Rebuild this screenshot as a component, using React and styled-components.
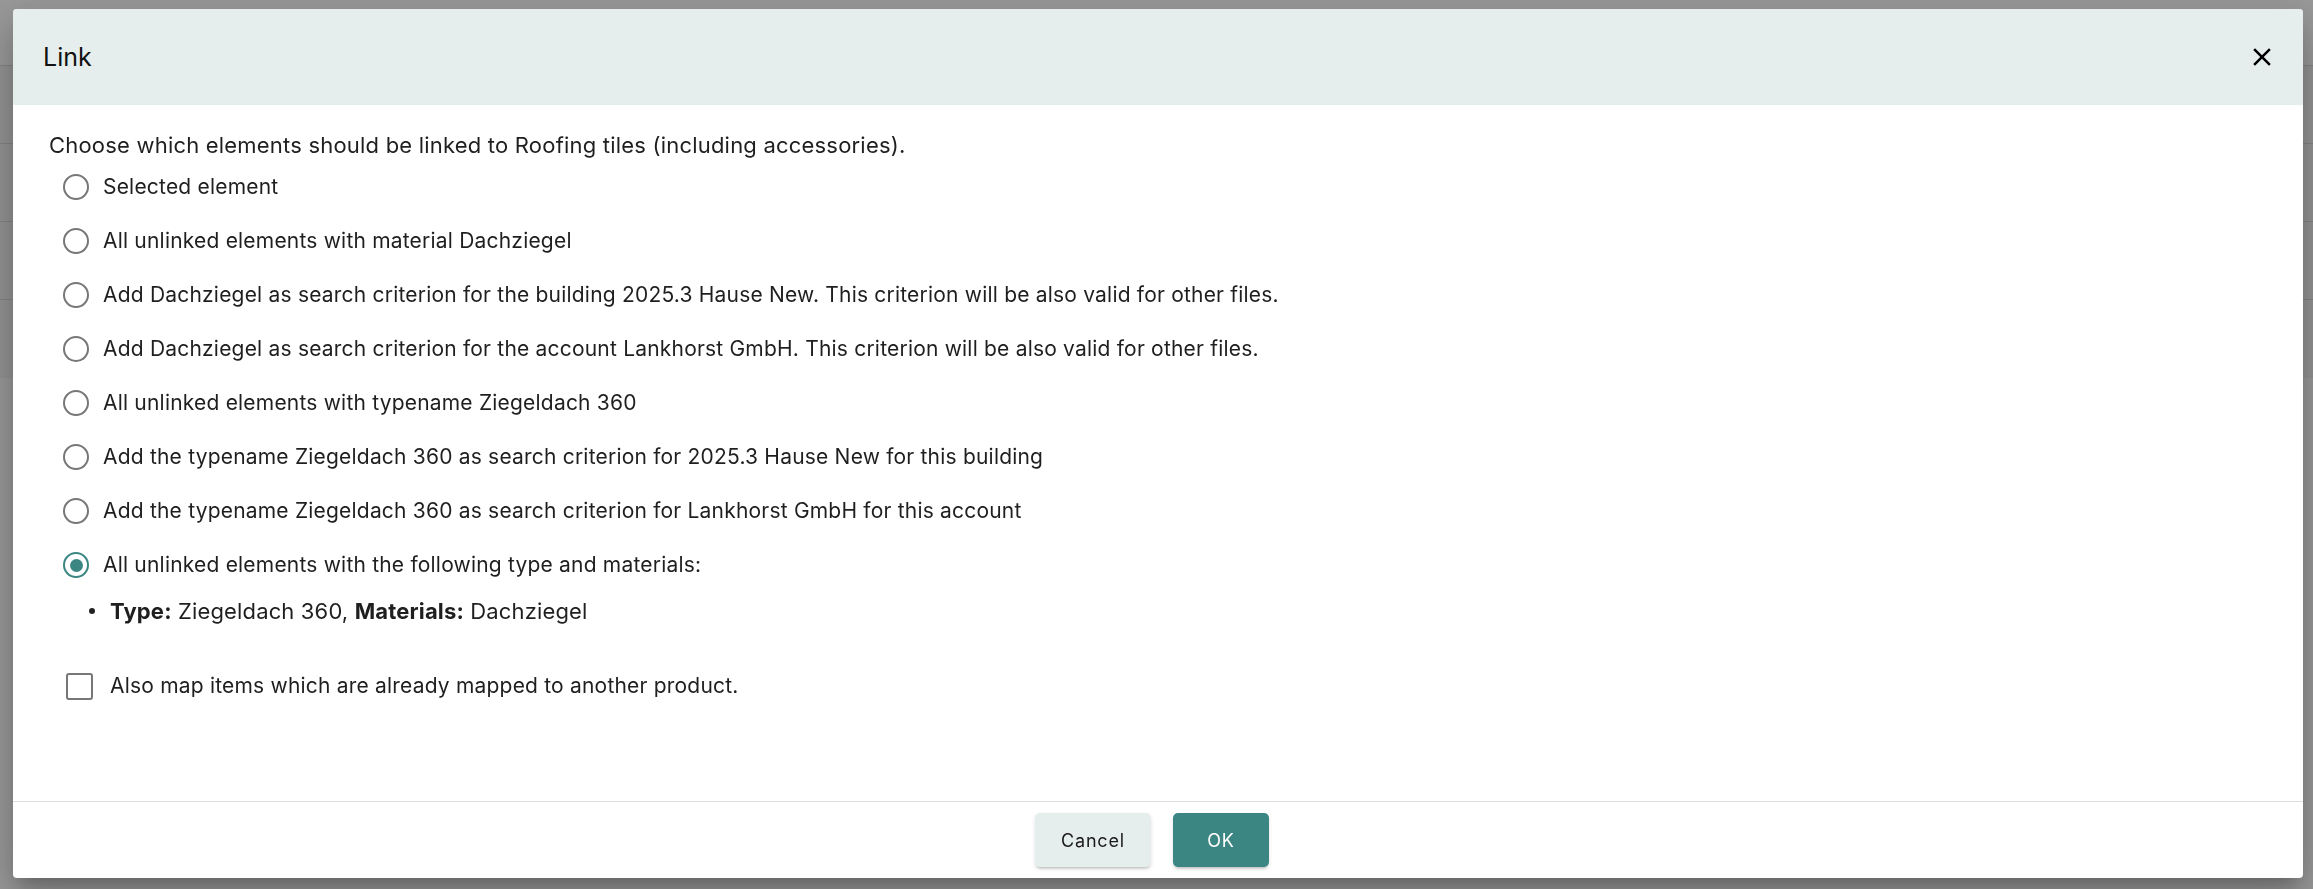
import React, { useState } from 'react'
import styled, { createGlobalStyle } from 'styled-components'

const GlobalStyle = createGlobalStyle`
  html, body {
    margin: 0;
    padding: 0;
    height: 100%;
    overflow: hidden;
    font-family: Inter, "Noto Sans", "Liberation Sans", sans-serif;
  }
  #root { height: 100%; }
`

const options = [
    'Selected element',
    'All unlinked elements with material Dachziegel',
    'Add Dachziegel as search criterion for the building 2025.3 Hause New. This criterion will be also valid for other files.',
    'Add Dachziegel as search criterion for the account Lankhorst GmbH. This criterion will be also valid for other files.',
    'All unlinked elements with typename Ziegeldach 360',
    'Add the typename Ziegeldach 360 as search criterion for 2025.3 Hause New for this building',
    'Add the typename Ziegeldach 360 as search criterion for Lankhorst GmbH for this account',
    'All unlinked elements with the following type and materials:',
]

export default function App() {
    const [selected, setSelected] = useState(7)
    const [alsoMap, setAlsoMap] = useState(false)

    return (
        <>
            <GlobalStyle />
            <Page>
                <PageTop />
                <PageRow />
                <PageRow />
                <PageRow />
                <PageRow $last />
            </Page>
            <Backdrop>
                <Dialog>
                    <Header>
                        <Title>Link</Title>
                        <CloseButton aria-label="close">
                            <svg width="30" height="30" viewBox="0 0 24 24">
                                <path
                                    fill="currentColor"
                                    d="M19 6.41 17.59 5 12 10.59 6.41 5 5 6.41 10.59 12 5 17.59 6.41 19 12 13.41 17.59 19 19 17.59 13.41 12z"
                                />
                            </svg>
                        </CloseButton>
                    </Header>
                    <Body>
                        <Intro>Choose which elements should be linked to Roofing tiles (including accessories).</Intro>
                        <RadioGroup>
                            {options.map((label, i) => (
                                <RadioRow key={i} onClick={() => setSelected(i)}>
                                    <RadioCircle $checked={selected === i} />
                                    <span>{label}</span>
                                </RadioRow>
                            ))}
                        </RadioGroup>
                        <Detail>
                            <Dot />
                            <span>
                                <b>Type:</b> Ziegeldach 360, <b>Materials:</b> Dachziegel
                            </span>
                        </Detail>
                        <CheckRow onClick={() => setAlsoMap(!alsoMap)}>
                            <CheckBox $checked={alsoMap} />
                            <span>Also map items which are already mapped to another product.</span>
                        </CheckRow>
                    </Body>
                    <Footer>
                        <Button>Cancel</Button>
                        <Button $primary>OK</Button>
                    </Footer>
                </Dialog>
            </Backdrop>
        </>
    )
}

const Page = styled.div`
  height: 100%;
  background: #ffffff;
  display: flex;
  flex-direction: column;
`

const PageTop = styled.div`
  height: 65px;
  border-bottom: 1px solid #dcdcdc;
`

const PageRow = styled.div`
  height: 77px;
  background: #f6f6f6;
  border-bottom: 1px solid ${p => (p.$last ? 'transparent' : '#dcdcdc')};
`

const Backdrop = styled.div`
  position: fixed;
  inset: 0;
  background: rgba(0, 0, 0, 0.4);
  display: flex;
  align-items: flex-start;
  padding: 9px 0 0 13px;
`

const Dialog = styled.div`
  width: 2290px;
  height: 869px;
  background: #ffffff;
  border-radius: 4px;
  overflow: hidden;
  display: flex;
  flex-direction: column;
  box-shadow: 0 11px 15px -7px rgba(0, 0, 0, 0.2), 0 24px 38px 3px rgba(0, 0, 0, 0.14),
    0 9px 46px 8px rgba(0, 0, 0, 0.12);
`

const Header = styled.div`
  height: 96px;
  flex-shrink: 0;
  background: #e6eeed;
  display: flex;
  align-items: center;
  justify-content: space-between;
  padding: 0 26px 0 30px;
  box-sizing: border-box;
`

const Title = styled.h2`
  margin: 0;
  font-size: 25px;
  font-weight: 400;
  color: #111;
`

const CloseButton = styled.button`
  border: none;
  background: none;
  padding: 0;
  width: 30px;
  height: 30px;
  color: #000;
  display: flex;
  cursor: pointer;
`

const Body = styled.div`
  flex: 1;
  padding: 26px 36px 0 36px;
  color: #1f1f1f;
  font-size: 21px;
  letter-spacing: 0.2px;
  line-height: 28px;
`

const Intro = styled.p`
  margin: 0;
  font-size: 22px;
  letter-spacing: 0.2px;
`

const RadioGroup = styled.div`
  display: flex;
  flex-direction: column;
  margin-top: 1px;
`

const RadioRow = styled.label`
  height: 54px;
  display: flex;
  align-items: center;
  gap: 14px;
  padding-left: 14px;
  cursor: pointer;
`

const RadioCircle = styled.span`
  width: 26px;
  height: 26px;
  box-sizing: border-box;
  border-radius: 50%;
  border: 2.5px solid ${p => (p.$checked ? '#3b8682' : '#777')};
  display: flex;
  align-items: center;
  justify-content: center;
  flex-shrink: 0;
  &::after {
    content: '';
    width: 13px;
    height: 13px;
    border-radius: 50%;
    background: #3b8682;
    display: ${p => (p.$checked ? 'block' : 'none')};
  }
`

const Detail = styled.div`
  display: flex;
  align-items: center;
  gap: 15px;
  margin-top: 5px;
  padding-left: 40px;
  font-size: 22px;
  letter-spacing: 0.15px;
  b { font-weight: 700; }
`

const Dot = styled.span`
  width: 6px;
  height: 6px;
  border-radius: 50%;
  background: #222;
  flex-shrink: 0;
`

const CheckRow = styled.label`
  height: 54px;
  margin-top: 34px;
  display: flex;
  align-items: center;
  gap: 17px;
  padding-left: 17px;
  cursor: pointer;
`

const CheckBox = styled.span`
  width: 27px;
  height: 27px;
  box-sizing: border-box;
  border-radius: 3px;
  border: 2.5px solid ${p => (p.$checked ? '#3b8682' : '#777')};
  background: ${p => (p.$checked ? '#3b8682' : 'transparent')};
  flex-shrink: 0;
`

const Footer = styled.div`
  height: 77px;
  flex-shrink: 0;
  border-top: 1px solid #dedede;
  box-sizing: border-box;
  display: flex;
  align-items: center;
  justify-content: center;
  gap: 22px;
  padding-right: 12px;
`

const Button = styled.button`
  height: 54px;
  min-width: ${p => (p.$primary ? '96px' : '116px')};
  padding: 0 20px;
  border: none;
  border-radius: 5px;
  background: ${p => (p.$primary ? '#3b8682' : '#e6eeed')};
  color: ${p => (p.$primary ? '#fff' : '#1a1a1a')};
  font-family: Inter, "Noto Sans", sans-serif;
  font-size: 18px;
  letter-spacing: 0.8px;
  font-weight: 400;
  box-shadow: 0 3px 3px -2px rgba(0, 0, 0, 0.2), 0 2px 4px 0 rgba(0, 0, 0, 0.12);
  cursor: pointer;
`
